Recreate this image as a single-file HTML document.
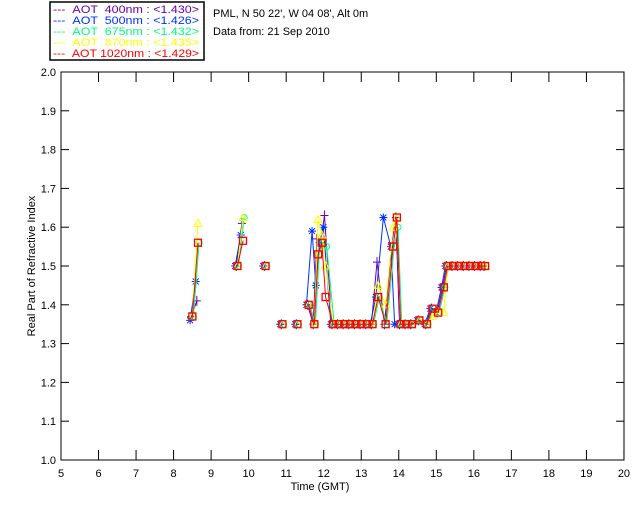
<!DOCTYPE html>
<html><head><meta charset="utf-8"><style>
body{margin:0;background:#fff;width:640px;height:512px;overflow:hidden}
svg{display:block}
text{font-family:"Liberation Sans",sans-serif;font-size:11px}
</style></head><body>
<svg id="s" width="640" height="512" xmlns="http://www.w3.org/2000/svg">
<rect x="50" y="2" width="154" height="58" fill="none" stroke="#000" stroke-width="1.5"/>
<g font-size="11">
<text x="53" y="13" fill="#6a00b0" textLength="146" lengthAdjust="spacingAndGlyphs">--- &#160;AOT &#160;400nm : &lt;1.430&gt;</text>
<text x="53" y="24" fill="#0030ff" textLength="146" lengthAdjust="spacingAndGlyphs">--- &#160;AOT &#160;500nm : &lt;1.426&gt;</text>
<text x="53" y="35" fill="#00ff80" textLength="146" lengthAdjust="spacingAndGlyphs">--- &#160;AOT &#160;675nm : &lt;1.432&gt;</text>
<text x="53" y="46" fill="#ffff00" textLength="146" lengthAdjust="spacingAndGlyphs">--- &#160;AOT &#160;870nm : &lt;1.435&gt;</text>
<text x="53" y="57" fill="#ff0000" textLength="146" lengthAdjust="spacingAndGlyphs">--- &#160;AOT 1020nm : &lt;1.429&gt;</text>
</g>
<text x="213" y="17">PML, N 50 22', W 04 08', Alt 0m</text>
<text x="213" y="35">Data from: 21 Sep 2010</text>
<rect x="61" y="72" width="563" height="388" fill="none" stroke="#000" stroke-width="1"/>
<g id="ax"></g>
<text x="320" y="490" text-anchor="middle" font-size="10">Time (GMT)</text>
<text transform="translate(35,266) rotate(-90)" text-anchor="middle" font-size="10">Real Part of Refractive Index</text>
<g id="d"></g>
</svg>
<script>
var X=t=>61+(t-5)*37.53,Y=v=>460-(v-1)*388,ns="http://www.w3.org/2000/svg";
var ax=document.getElementById('ax'),d=document.getElementById('d');
function el(p,tag,a,txt){var e=document.createElementNS(ns,tag);for(var k in a)e.setAttribute(k,a[k]);if(txt)e.textContent=txt;p.appendChild(e);return e}
for(var t=5;t<=20;t++){var x=X(t);el(ax,'line',{x1:x,x2:x,y1:460,y2:450,stroke:'#000'});el(ax,'line',{x1:x,x2:x,y1:72,y2:82,stroke:'#000'});el(ax,'text',{x:x,y:477,'text-anchor':'middle','font-size':10},t)}
for(var i=0;i<=10;i++){var v=1+i/10,y=Y(v);el(ax,'line',{x1:61,x2:69,y1:y,y2:y,stroke:'#000'});el(ax,'line',{x1:624,x2:616,y1:y,y2:y,stroke:'#000'});el(ax,'text',{x:56,y:y+4,'text-anchor':'end','font-size':10},v.toFixed(1))}
var red=[[[8.5,1.37],[8.65,1.56]],[[9.7,1.5],[9.85,1.565]],[[10.45,1.5]],[[10.9,1.35]],[[11.3,1.35]],[[11.6,1.4],[11.75,1.35],[11.85,1.53],[11.95,1.56],[12.05,1.42],[12.25,1.35],[12.4,1.35],[12.55,1.35],[12.7,1.35],[12.85,1.35],[13.0,1.35],[13.15,1.35],[13.3,1.35],[13.45,1.42],[13.65,1.35],[13.85,1.55],[13.95,1.625],[14.05,1.35],[14.2,1.35],[14.35,1.35],[14.55,1.36],[14.75,1.35],[14.9,1.39],[15.05,1.38],[15.2,1.445],[15.3,1.5],[15.45,1.5],[15.6,1.5],[15.75,1.5],[15.9,1.5],[16.05,1.5],[16.2,1.5],[16.3,1.5]]];
var series=[
 {c:'#6a00b0',m:'+',dt:-0.03,alt:{8.65:1.41,9.85:1.61,11.85:1.57,12.05:1.63,13.45:1.51,13.85:1.56}},
 {c:'#0030ff',m:'*',dt:-0.06,alt:{8.65:1.46,8.5:1.36,9.85:1.58,11.75:1.59,11.85:1.45,12.05:1.6,13.65:1.625,13.85:1.55,13.95:1.35}},
 {c:'#00ff80',m:'o',dt:0.03,alt:{8.65:1.56,9.85:1.625,11.85:1.53,12.05:1.55,13.95:1.6}},
 {c:'#ffff00',m:'^',dt:0.0,alt:{8.65:1.61,9.85:1.625,11.85:1.62,11.95:1.58,12.05:1.5,13.45:1.45,13.65:1.4,13.85:1.6,14.9:1.37,15.2:1.38}},
 {c:'#ff0000',m:'s',dt:0,alt:{}}];
series.forEach(s=>{
 red.forEach(seg=>{
  var pts=seg.map(p=>[X(p[0]+s.dt),Y(s.alt[p[0]]!==undefined?s.alt[p[0]]:p[1])]);
  if(pts.length>1)el(d,'polyline',{points:pts.map(p=>p.join(',')).join(' '),fill:'none',stroke:s.c,'stroke-width':1});
  pts.forEach(p=>{var x=p[0],y=p[1];
   if(s.m=='+')el(d,'path',{d:`M${x-4},${y}h8M${x},${y-5}v10`,stroke:s.c,'stroke-width':1});
   if(s.m=='*')el(d,'path',{d:`M${x-4},${y}h8M${x},${y-4}v8M${x-3},${y-3}l6,6M${x-3},${y+3}l6,-6`,stroke:s.c,'stroke-width':1});
   if(s.m=='o')el(d,'circle',{cx:x,cy:y,r:3,fill:'none',stroke:s.c,'stroke-width':1});
   if(s.m=='^')el(d,'path',{d:`M${x},${y-4}L${x+4},${y+3}L${x-4},${y+3}Z`,fill:'none',stroke:s.c,'stroke-width':1});
   if(s.m=='s')el(d,'rect',{x:x-3.5,y:y-3.5,width:7,height:7,fill:'none',stroke:s.c,'stroke-width':1.3});
  });
 });
});
</script>
</body></html>
